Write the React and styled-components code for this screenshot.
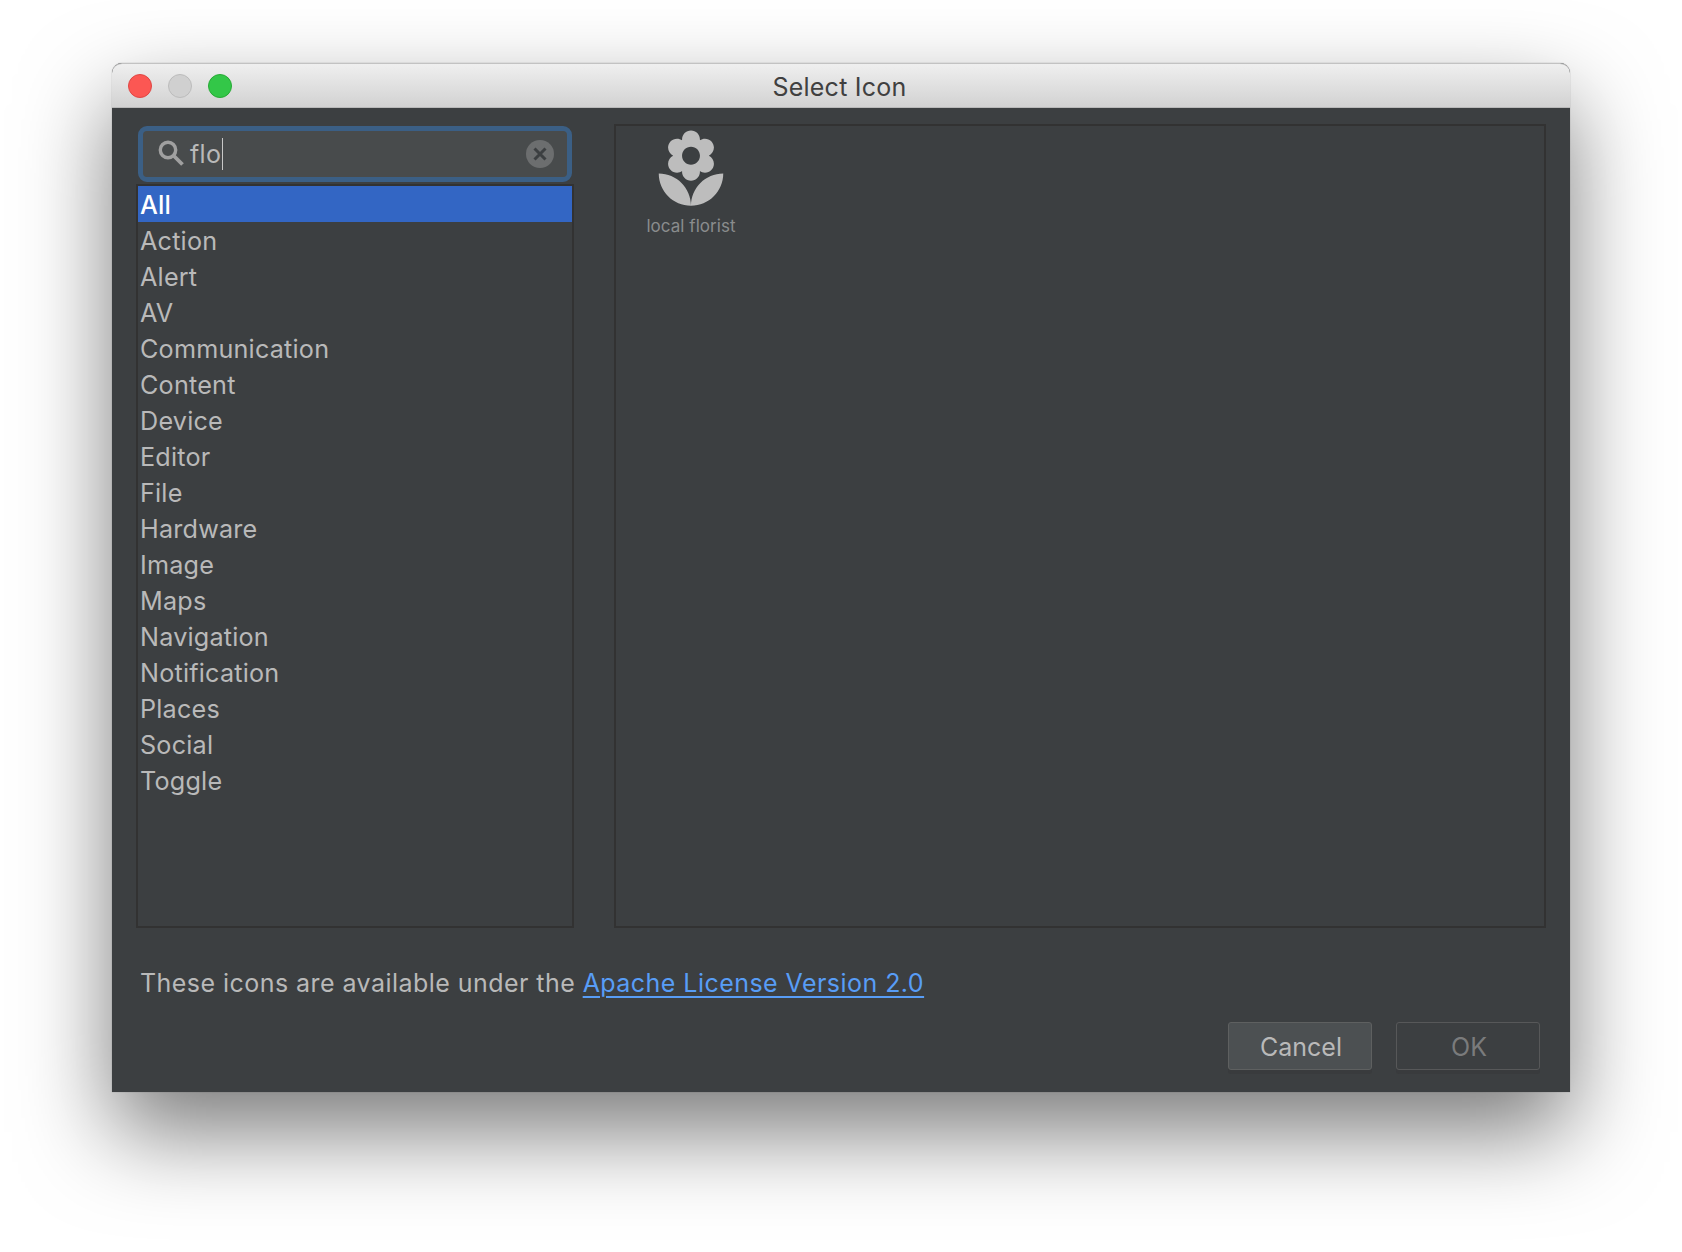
import React from "react";
import styled, { createGlobalStyle } from "styled-components";

const Global = createGlobalStyle`
  html, body { margin: 0; padding: 0; background: #fff; }
  body { font-family: Inter, "Liberation Sans", sans-serif; overflow: hidden; }
`;

const Stage = styled.div`
  width: 1682px;
  height: 1252px;
  padding: 63px 112px 160px 112px;
  box-sizing: border-box;
`;

const Window = styled.div`
  display: flex;
  flex-direction: column;
  width: 1458px;
  height: 1029px;
  border-radius: 10px 10px 0 0;
  background: #3c3f41;
  box-shadow: 0 40px 90px rgba(0, 0, 0, 0.52), 0 0 1px rgba(0, 0, 0, 0.5);
`;

const TitleBar = styled.header`
  position: relative;
  display: flex;
  align-items: center;
  justify-content: center;
  flex: none;
  height: 45px;
  box-sizing: border-box;
  border-top: 1px solid #c2c2c2;
  border-bottom: 1px solid #b9b9b9;
  border-radius: 10px 10px 0 0;
  background: linear-gradient(#efefef, #d2d2d2);
`;

const Lights = styled.div`
  position: absolute;
  left: 16px;
  top: 10px;
  display: flex;
  gap: 16px;
`;

const Light = styled.span`
  width: 24px;
  height: 24px;
  box-sizing: border-box;
  border-radius: 50%;
  background: ${(p) => p.$bg};
  border: 1px solid ${(p) => p.$edge};
`;

const Title = styled.h1`
  margin: 2px 0 0 -3px;
  font-size: 25px;
  font-weight: 400;
  letter-spacing: 0.25px;
  color: #404040;
`;

const Body = styled.main`
  flex: 1;
  display: flex;
  flex-direction: column;
  padding: 16px 24px 22px 24px;
`;

const Columns = styled.div`
  display: grid;
  grid-template-columns: 438px 1fr;
  column-gap: 40px;
  height: 804px;
  flex: none;
`;

const LeftColumn = styled.div`
  display: flex;
  flex-direction: column;
  padding-top: 2px;
  min-height: 0;
`;

const Search = styled.div`
  display: flex;
  align-items: center;
  flex: none;
  height: 56px;
  margin: 0 2px 2px;
  padding: 0 13px 0 15px;
  box-sizing: border-box;
  border: 5px solid #3b5f85;
  border-radius: 9px;
  background: #484b4c;
`;

const SearchIcon = styled.svg`
  flex: none;
  margin-top: -2px;
`;

const SearchText = styled.span`
  margin-left: 6px;
  font-size: 25px;
  color: #b9b9b9;
  letter-spacing: 0.3px;
`;

const Caret = styled.span`
  width: 1px;
  height: 32px;
  margin-left: 1px;
  background: #c8c8c8;
`;

const Clear = styled.svg`
  margin-left: auto;
`;

const List = styled.ul`
  flex: 1;
  margin: 0;
  padding: 0;
  list-style: none;
  border: 2px solid #323232;
`;

const Row = styled.li`
  height: 36px;
  padding-left: 2px;
  font-size: 25.2px;
  line-height: 38px;
  letter-spacing: 0.2px;
  color: ${(p) => (p.$selected ? "#fff" : "#b9b9b9")};
  background: ${(p) => (p.$selected ? "#3366c4" : "transparent")};
  font-weight: ${(p) => (p.$selected ? 500 : 400)};
`;

const IconPanel = styled.section`
  border: 2px solid #323232;
`;

const IconTile = styled.figure`
  display: flex;
  flex-direction: column;
  align-items: center;
  width: 150px;
  margin: 0;
`;

const FlowerIcon = styled.svg`
  display: block;
  margin-top: 1px;
  margin-bottom: 2px;
`;

const IconLabel = styled.figcaption`
  font-size: 17px;
  line-height: 22px;
  letter-spacing: 0.05px;
  color: #8a8c8d;
  white-space: nowrap;
`;

const Licence = styled.p`
  margin: 38px 0 0 4px;
  font-size: 25px;
  line-height: 34px;
  letter-spacing: 0.45px;
  color: #b9b9b9;
`;

const Link = styled.a`
  color: #589df6;
  text-decoration: underline;
  text-decoration-thickness: 2px;
  text-underline-offset: 4px;
`;

const Actions = styled.div`
  display: flex;
  justify-content: flex-end;
  gap: 24px;
  margin-top: auto;
  padding-right: 6px;
`;

const Button = styled.button`
  width: 144px;
  height: 48px;
  padding: 1px 0 0 2px;
  box-sizing: border-box;
  border: 1px solid ${(p) => (p.$disabled ? "#575859" : "#5e6060")};
  border-radius: 3px;
  background: ${(p) => (p.$disabled ? "transparent" : "#4c5052")};
  box-shadow: 0 4px 0 #393b3d;
  color: ${(p) => (p.$disabled ? "#7a7b7c" : "#b9b9b9")};
  font-family: inherit;
  font-size: 25px;
`;

const categories = ["All", "Action", "Alert", "AV", "Communication", "Content", "Device", "Editor", "File", "Hardware", "Image", "Maps", "Navigation", "Notification", "Places", "Social", "Toggle"];

export default function App() {
  return (
    <Stage>
      <Global />
      <Window>
        <TitleBar>
          <Lights>
            <Light $bg="#fc5753" $edge="#df4744" />
            <Light $bg="#d0d0d0" $edge="#bcbcbc" />
            <Light $bg="#33c748" $edge="#27aa35" />
          </Lights>
          <Title>Select Icon</Title>
        </TitleBar>
        <Body>
          <Columns>
            <LeftColumn>
              <Search>
                <SearchIcon width="26" height="26" viewBox="0 0 26 26" fill="none" stroke="#a0a0a0">
                  <circle cx="10" cy="10" r="7.7" strokeWidth="3.4" />
                  <path d="M15.5 15.5L24.5 24.5" strokeWidth="3.8" />
                </SearchIcon>
                <SearchText>flo</SearchText>
                <Caret />
                <Clear width="28" height="28" viewBox="0 0 28 28">
                  <circle cx="14" cy="14" r="14" fill="#6c6e6f" />
                  <path d="M8.5 8.5L19.5 19.5M19.5 8.5L8.5 19.5" stroke="#3c3f41" strokeWidth="3" />
                </Clear>
              </Search>
              <List>
                {categories.map((name, i) => (
                  <Row key={name} $selected={i === 0}>{name}</Row>
                ))}
              </List>
            </LeftColumn>
            <IconPanel>
              <IconTile>
                <FlowerIcon width="86" height="86" viewBox="0 0 24 24" fill="#bdbdbd">
                  <path d="M12 22c4.97 0 9-4.03 9-9-4.97 0-9 4.03-9 9zM5.6 10.25c0 1.38 1.12 2.5 2.5 2.5.53 0 1.01-.16 1.42-.44l-.02.19c0 1.38 1.12 2.5 2.5 2.5s2.5-1.12 2.5-2.5l-.02-.19c.4.28.89.44 1.42.44 1.38 0 2.5-1.12 2.5-2.5 0-1-.59-1.85-1.43-2.25.84-.4 1.43-1.25 1.43-2.25 0-1.38-1.12-2.5-2.5-2.5-.53 0-1.01.16-1.42.44l.02-.19C14.5 2.12 13.38 1 12 1S9.5 2.12 9.5 3.5l.02.19c-.4-.28-.89-.44-1.42-.44-1.38 0-2.5 1.12-2.5 2.5 0 1 .59 1.85 1.43 2.25-.84.4-1.43 1.25-1.43 2.25zM12 5.5c1.38 0 2.5 1.12 2.5 2.5s-1.12 2.5-2.5 2.5S9.5 9.38 9.5 8s1.12-2.5 2.5-2.5zM3 13c0 4.97 4.03 9 9 9 0-4.97-4.03-9-9-9z" />
                </FlowerIcon>
                <IconLabel>local florist</IconLabel>
              </IconTile>
            </IconPanel>
          </Columns>
          <Licence>
            These icons are available under the <Link href="#">Apache License Version 2.0</Link>
          </Licence>
          <Actions>
            <Button>Cancel</Button>
            <Button $disabled>OK</Button>
          </Actions>
        </Body>
      </Window>
    </Stage>
  );
}
